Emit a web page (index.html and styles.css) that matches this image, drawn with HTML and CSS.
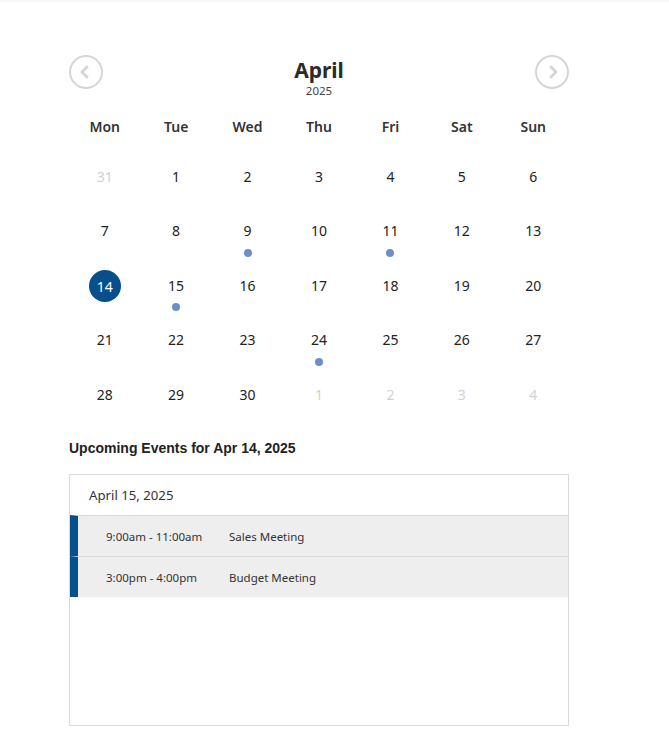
FILE: index.html
```html
<!DOCTYPE html>
<html lang="en">
<head>
<meta charset="utf-8">
<title>Calendar</title>
<link rel="stylesheet" href="styles.css">
</head>
<body>
<div class="topbar"></div>
<main class="wrap">
  <header class="cal-head">
    <button class="nav-btn" aria-label="Previous month">
      <svg width="34" height="34" viewBox="0 0 34 34"><circle cx="17" cy="17" r="16" fill="none" stroke="#d4d7d9" stroke-width="2"/><polyline points="18,12 13,17 18,22" fill="none" stroke="#d4d7d9" stroke-width="3" stroke-linecap="round" stroke-linejoin="round"/></svg>
    </button>
    <div class="title">
      <div class="month">April</div>
      <div class="year">2025</div>
    </div>
    <button class="nav-btn" aria-label="Next month">
      <svg width="34" height="34" viewBox="0 0 34 34"><circle cx="17" cy="17" r="16" fill="none" stroke="#d4d7d9" stroke-width="2"/><polyline points="16,12 21,17 16,22" fill="none" stroke="#d4d7d9" stroke-width="3" stroke-linecap="round" stroke-linejoin="round"/></svg>
    </button>
  </header>

  <div class="weekdays">
    <div>Mon</div><div>Tue</div><div>Wed</div><div>Thu</div><div>Fri</div><div>Sat</div><div>Sun</div>
  </div>

  <div class="days">
    <div class="day muted"><span class="num">31</span></div>
    <div class="day"><span class="num">1</span></div>
    <div class="day"><span class="num">2</span></div>
    <div class="day"><span class="num">3</span></div>
    <div class="day"><span class="num">4</span></div>
    <div class="day"><span class="num">5</span></div>
    <div class="day"><span class="num">6</span></div>

    <div class="day"><span class="num">7</span></div>
    <div class="day"><span class="num">8</span></div>
    <div class="day"><span class="num">9</span><span class="dot"></span></div>
    <div class="day"><span class="num">10</span></div>
    <div class="day"><span class="num">11</span><span class="dot"></span></div>
    <div class="day"><span class="num">12</span></div>
    <div class="day"><span class="num">13</span></div>

    <div class="day selected"><span class="num">14</span></div>
    <div class="day"><span class="num">15</span><span class="dot"></span></div>
    <div class="day"><span class="num">16</span></div>
    <div class="day"><span class="num">17</span></div>
    <div class="day"><span class="num">18</span></div>
    <div class="day"><span class="num">19</span></div>
    <div class="day"><span class="num">20</span></div>

    <div class="day"><span class="num">21</span></div>
    <div class="day"><span class="num">22</span></div>
    <div class="day"><span class="num">23</span></div>
    <div class="day"><span class="num">24</span><span class="dot"></span></div>
    <div class="day"><span class="num">25</span></div>
    <div class="day"><span class="num">26</span></div>
    <div class="day"><span class="num">27</span></div>

    <div class="day"><span class="num">28</span></div>
    <div class="day"><span class="num">29</span></div>
    <div class="day"><span class="num">30</span></div>
    <div class="day muted"><span class="num">1</span></div>
    <div class="day muted"><span class="num">2</span></div>
    <div class="day muted"><span class="num">3</span></div>
    <div class="day muted"><span class="num">4</span></div>
  </div>

  <h2 class="upcoming">Upcoming Events for Apr 14, 2025</h2>

  <section class="events">
    <div class="events-date">April 15, 2025</div>
    <div class="event">
      <span class="time">9:00am - 11:00am</span>
      <span class="name">Sales Meeting</span>
    </div>
    <div class="event">
      <span class="time">3:00pm - 4:00pm</span>
      <span class="name">Budget Meeting</span>
    </div>
  </section>
</main>
</body>
</html>
```

FILE: styles.css
```css
* { box-sizing: border-box; }

html, body {
  margin: 0;
  background: #fff;
}

body {
  font-family: "Noto Sans", "Open Sans", sans-serif;
  color: #333;
}

.topbar {
  height: 2px;
  background: #f6f6f6;
}

.wrap {
  width: 500px;
  margin-left: 69px;
  padding-top: 53px;
}

.cal-head {
  display: flex;
  justify-content: space-between;
  align-items: flex-start;
  height: 57px;
}

.nav-btn {
  width: 34px;
  height: 34px;
  padding: 0;
  border: 0;
  background: none;
  display: block;
}

.nav-btn svg { display: block; }

.title {
  text-align: center;
  margin-top: 1px;
}

.month {
  font-size: 21px;
  font-weight: 700;
  line-height: 28px;
  color: #2b2b2b;
}

.year {
  font-size: 11.5px;
  line-height: 14px;
  color: #444;
}

.weekdays {
  display: grid;
  grid-template-columns: repeat(7, 1fr);
  height: 30px;
  margin-bottom: 18px;
}

.weekdays div {
  text-align: center;
  font-size: 14px;
  font-weight: 600;
  line-height: 30px;
  color: #333;
}

.days {
  display: grid;
  grid-template-columns: repeat(7, 1fr);
  grid-auto-rows: 54.5px;
}

.day {
  display: flex;
  flex-direction: column;
  align-items: center;
}

.num {
  width: 32px;
  height: 32px;
  border-radius: 50%;
  display: flex;
  align-items: center;
  justify-content: center;
  font-size: 14px;
  color: #222;
}

.day.muted .num { color: #cfd2d4; }

.day.selected .num {
  background: #064f8c;
  color: #fff;
  margin-top: 1px;
}

.dot {
  width: 8px;
  height: 8px;
  border-radius: 50%;
  background: #6b8fca;
  margin-top: 2px;
}

.upcoming {
  font-family: "Liberation Sans", Arial, sans-serif;
  font-size: 14px;
  font-weight: 700;
  line-height: 16px;
  color: #222;
  margin: 7px 0 18px;
}

.events {
  border: 1px solid #d9d9d9;
  height: 252px;
}

.events-date {
  height: 40px;
  padding-left: 19px;
  font-size: 13.2px;
  line-height: 40px;
  color: #333;
}

.event {
  display: flex;
  align-items: center;
  height: 41px;
  border-top: 1px solid #d9d9d9;
  border-left: 8px solid #064f8c;
  background: #eeeeee;
  padding-left: 28px;
  padding-top: 1px;
  font-size: 11.5px;
  color: #333;
}

.time {
  width: 123px;
}
```
